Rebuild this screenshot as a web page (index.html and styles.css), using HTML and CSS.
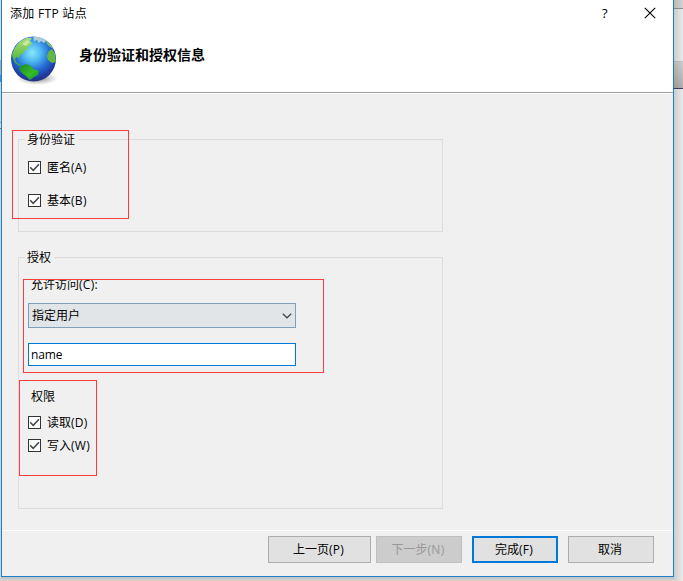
FILE: index.html
```html
<!DOCTYPE html>
<html lang="zh-CN">
<head>
<meta charset="utf-8">
<title>添加 FTP 站点</title>
<link rel="stylesheet" href="styles.css">
</head>
<body>
<div class="edge edge-left"></div>
<main class="dialog">
  <header class="header">
    <div class="titlebar">
      <span class="title">添加 FTP 站点</span>
      <span class="help">?</span>
      <svg class="close" width="12" height="12" viewBox="0 0 12 12"><path d="M.8.8l10.4 10.4M11.2.8L.8 11.2" stroke="#000" stroke-width="1.1" fill="none"/></svg>
    </div>
    <div class="banner">
      <svg class="globe" width="50" height="50" viewBox="0 0 50 50">
        <defs>
          <radialGradient id="sea" cx=".47" cy=".36" r=".64"><stop offset="0" stop-color="#8be8fc"/><stop offset=".3" stop-color="#50baf0"/><stop offset=".6" stop-color="#2570d6"/><stop offset=".87" stop-color="#203da4"/><stop offset="1" stop-color="#24347c"/></radialGradient>
          <linearGradient id="land" x1="0" y1="0" x2="0" y2="1"><stop offset="0" stop-color="#a9df79"/><stop offset="1" stop-color="#3fae2c"/></linearGradient>
          <linearGradient id="south" x1="0" y1="0" x2="1" y2="1"><stop offset="0" stop-color="#1d8a24"/><stop offset=".6" stop-color="#35bd28"/><stop offset="1" stop-color="#178b2b"/></linearGradient>
          <radialGradient id="shade"><stop offset="0" stop-color="#555" stop-opacity=".8"/><stop offset="1" stop-color="#888" stop-opacity="0"/></radialGradient>
          <clipPath id="disc"><circle cx="23.5" cy="23" r="22.5"/></clipPath>
        </defs>
        <ellipse cx="27" cy="42.5" rx="21" ry="6.5" fill="url(#shade)"/>
        <circle cx="23.5" cy="23" r="22.5" fill="url(#sea)"/>
        <g clip-path="url(#disc)">
          <path d="M2 19Q5 6 17 2L22 2 20 5 22 7 20 10 17 11 18 13 15 14 14 17 10 19 9 22 6 21 5 24 7 27 11 29 10 30 5 27 3 22Z" fill="url(#land)"/>
          <path d="M12 8L17 4 20 6 16 10Z" fill="#c8ea9c"/>
          <path d="M23 0L34 1 37 4 34 7 31 5 29 7 27 4 24 5Z" fill="#a9cdd8"/>
          <path d="M35 3L41 8 44 13 40 11 37 8Z" fill="#79bd79"/>
          <path d="M39 15L42 13 45 18 46 26 42 27 38 24 37 20Z" fill="#62b93e"/>
          <path d="M11 30L16 28 21 30 23 33 29 35 28 39 24 41 20 44 16 40 12 37 9 33Z" fill="url(#south)"/>
        </g>
      </svg>
      <h1 class="heading">身份验证和授权信息</h1>
    </div>
  </header>
  <section class="content">
    <div class="group group-auth">
      <span class="legend">身份验证</span>
      <label class="check"><svg class="box" width="13" height="13" viewBox="0 0 13 13"><rect x=".5" y=".5" width="12" height="12" fill="#fff" stroke="#333"/><path d="M2.2 6.2l3 3.1 5.8-6" fill="none" stroke="#444" stroke-width="1.5"/></svg><span>匿名<span class="key">(A)</span></span></label>
      <label class="check"><svg class="box" width="13" height="13" viewBox="0 0 13 13"><rect x=".5" y=".5" width="12" height="12" fill="#fff" stroke="#333"/><path d="M2.2 6.2l3 3.1 5.8-6" fill="none" stroke="#444" stroke-width="1.5"/></svg><span>基本<span class="key">(B)</span></span></label>
    </div>
    <div class="group group-access">
      <span class="legend">授权</span>
      <div class="caption">允许访问<span class="key">(C):</span></div>
      <div class="select"><span>指定用户</span><svg width="10" height="6" viewBox="0 0 10 6"><path d="M.8.8L5 4.8 9.2.8" fill="none" stroke="#444" stroke-width="1.2"/></svg></div>
      <div class="input"><span>name</span></div>
      <div class="rights">权限</div>
      <label class="check"><svg class="box" width="13" height="13" viewBox="0 0 13 13"><rect x=".5" y=".5" width="12" height="12" fill="#fff" stroke="#333"/><path d="M2.2 6.2l3 3.1 5.8-6" fill="none" stroke="#444" stroke-width="1.5"/></svg><span>读取<span class="key">(D)</span></span></label>
      <label class="check"><svg class="box" width="13" height="13" viewBox="0 0 13 13"><rect x=".5" y=".5" width="12" height="12" fill="#fff" stroke="#333"/><path d="M2.2 6.2l3 3.1 5.8-6" fill="none" stroke="#444" stroke-width="1.5"/></svg><span>写入<span class="key">(W)</span></span></label>
    </div>
  </section>
  <footer class="footer">
    <div class="button back">上一页<span class="key">(P)</span></div>
    <div class="button disabled">下一步<span class="key">(N)</span></div>
    <div class="button primary">完成<span class="key">(F)</span></div>
    <div class="button">取消</div>
  </footer>
</main>
<div class="edge edge-right"></div>
<div class="mark mark-auth"></div>
<div class="mark mark-user"></div>
<div class="mark mark-rights"></div>
</body>
</html>
```
FILE: styles.css
```css
* { box-sizing: border-box; }
body {
  margin: 0;
  width: 683px;
  height: 581px;
  overflow: hidden;
  position: relative;
  display: grid;
  grid-template-columns: 1px 673px 9px;
  background: linear-gradient(#ddd 0 577px, #c2c2c2 577px, #d6d6d6 581px);
  font: 12px/16px "Open Sans", "Noto Sans CJK SC", sans-serif;
  color: #000;
}
.edge-left { background: linear-gradient(#dedede 0 60px, #aaa 60px 75px, #3d91c8 75px 82px, #d4d4d4 82px 122px, #b59b78 122px 123px, #d8d8d8 123px 128px, #96714c 128px 129px, #d3d3d3 129px); }
.edge-right {
  background:
    linear-gradient(90deg, rgba(0,0,0,.16), rgba(0,0,0,.04)),
    linear-gradient(#dedbdb 0 8px, #999 8px 9px, #f3f3f3 9px 61px, #ccc 61px 62px, #d9d7d7 62px, #b9b5b5 88px, #45406b 88px 89px, #f4f4f4 89px);
}
.dialog {
  height: 577px;
  display: flex;
  flex-direction: column;
  background: #f0f0f0;
  border: 1px solid #1a7fd0;
  border-top: 0;
}
.header { height: 94px; background: #fff; border-bottom: 1px solid #fff; box-shadow: inset 0 -1px #a0a0a0; }
.titlebar { height: 28px; display: flex; align-items: center; padding: 0 17px 2px 8px; }
.title { flex: 1; padding-top: 2px; letter-spacing: .3px; }
.help { width: 7px; margin-right: 35px; font-size: 13px; font-weight: 500; }
.banner { display: flex; padding: 8px 0 0 8px; }
.heading { margin: 10px 0 0 19px; font-size: 14px; line-height: 18px; font-weight: 700; }
.content { height: 436px; padding: 45px 0 0 16px; }
.group { width: 425px; border: 1px solid #dcdcdc; padding-left: 9px; }
.legend { display: block; width: max-content; height: 16px; margin: -8px 0 0 -3px; padding: 0 3px 0 2px; background: #f0f0f0; }
.group-auth { height: 93px; }
.group-access { height: 252px; margin-top: 25px; }
.key { letter-spacing: .3px; }
.check { display: flex; align-items: flex-start; gap: 6px; height: 16px; }
.box { margin-top: 1px; }
.group-auth .check { margin-top: 12px; }
.group-auth .check + .check { margin-top: 17px; }
.caption { height: 13px; margin: 14px 0 0 3px; line-height: 10px; overflow: hidden; }
.select { width: 268px; height: 25px; margin-top: 10px; padding: 0 3px; display: flex; align-items: center; justify-content: space-between; background: #e1e5e8; border: 1px solid #829fb9; }
.input { width: 268px; height: 23px; margin-top: 15px; padding: 3px 2px; background: #fff; border: 1px solid #0078d7; letter-spacing: -.1px; }
.rights { margin: 23px 0 0 3px; }
.rights + .check { margin-top: 10px; }
.rights + .check + .check { margin-top: 7px; }
.footer { height: 46px; border-top: 1px solid #fff; display: flex; gap: 10px; padding: 5px 19px 0 0; justify-content: flex-end; }
.button { width: 86px; height: 27px; padding-right: 2px; line-height: 25px; text-align: center; background: #e1e1e1; border: 1px solid #adadad; }
.back { width: 103px; margin-right: -5px; }
.disabled { background: #ccc; border-color: #bfbfbf; color: #999; }
.primary { border: 2px solid #0078d7; line-height: 23px; }
.mark { position: absolute; border: 1px solid #fb3c3c; }
.mark-auth { left: 12px; top: 130px; width: 117px; height: 89px; }
.mark-user { left: 23px; top: 279px; width: 301px; height: 94px; }
.mark-rights { left: 19px; top: 380px; width: 78px; height: 96px; }
```
